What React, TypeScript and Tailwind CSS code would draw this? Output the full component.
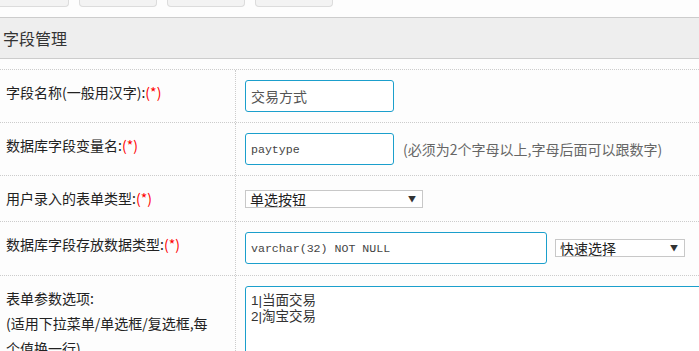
import React from 'react';

const cjk = "font-['Noto_Sans_CJK_SC','Noto_Sans',sans-serif]";

const Req = () => <span className="text-[#ff0000]">(*)</span>;

const FakeSelect = ({ label, width }: { label: string; width: string }) => (
  <div className={`${width} h-[18px] border border-[#c8c8c8] bg-white flex items-center justify-between pl-[4px] pr-[6px] text-[14px] leading-[16px] text-[#222]`}>
    <span>{label}</span>
    <span className="text-[8px] text-[#333]">▼</span>
  </div>
);

const Row = ({ h, label, children }: { h: string; label: React.ReactNode; children: React.ReactNode }) => (
  <div className={`flex ${h} border-t border-dotted border-[#ccc]`}>
    <div className="w-[236px] shrink-0 border-r border-dotted border-[#ccc] pl-[6px] pr-[16px] pt-[10px] leading-[25px] text-[14px] text-[#222]">
      {label}
    </div>
    <div className="flex-1 pl-[9px] pt-[10px]">{children}</div>
  </div>
);

const App: React.FC = () => {
  return (
    <div className={`w-full h-[351px] overflow-hidden bg-[#fdfdfd] ${cjk}`}>
      {/* top tabs, cut off */}
      <div className="h-[18px] border-b border-[#cccccc] flex items-start gap-[10px] ml-[-9px]">
        {[0, 1, 2, 3].map((i) => (
          <div key={i} className="w-[78px] h-[7px] bg-[#f3f3f3] border border-t-0 border-[#dcdcdc] rounded-b-[4px]" />
        ))}
      </div>

      {/* section header */}
      <div className="h-[41px] bg-[#eeeeee] border-b border-[#cccccc] flex items-center pl-[3px] text-[16px] text-[#333]">
        字段管理
      </div>

      <div className="mt-[10px]">
        <Row h="h-[53px]" label={<>字段名称(一般用汉字):<Req /></>}>
          <input
            readOnly
            value="交易方式"
            className={`w-[149px] h-[32px] border border-[#1b9fcc] rounded-[3px] px-[5px] text-[14px] text-[#555] bg-white outline-none ${cjk}`}
          />
        </Row>

        <Row h="h-[53px]" label={<>数据库字段变量名:<Req /></>}>
          <div className="flex items-center gap-[9px]">
            <input
              readOnly
              value="paytype"
              className="w-[149px] h-[32px] border border-[#1b9fcc] rounded-[3px] px-[5px] text-[11.6px] text-[#444] bg-white outline-none font-['Liberation_Mono',monospace]"
            />
            <span className="text-[14px] text-[#666]">(必须为2个字母以上,字母后面可以跟数字)</span>
          </div>
        </Row>

        <Row h="h-[46px]" label={<>用户录入的表单类型:<Req /></>}>
          <div className="h-[25px] flex items-center">
            <FakeSelect label="单选按钮" width="w-[178px]" />
          </div>
        </Row>

        <Row h="h-[54px]" label={<>数据库字段存放数据类型:<Req /></>}>
          <div className="flex items-center gap-[8px] h-[32px]">
            <input
              readOnly
              value="varchar(32) NOT NULL"
              className="w-[302px] h-[32px] border border-[#1b9fcc] rounded-[3px] px-[5px] text-[11.6px] text-[#444] bg-white outline-none font-['Liberation_Mono',monospace]"
            />
            <FakeSelect label="快速选择" width="w-[130px]" />
          </div>
        </Row>

        <Row
          h="h-[120px]"
          label={
            <>
              表单参数选项:
              <br />
              (适用下拉菜单/单选框/复选框,每个值换一行)
            </>
          }
        >
          <textarea
            readOnly
            value={'1|当面交易\n2|淘宝交易'}
            className="block w-[500px] h-[90px] border border-[#1b9fcc] rounded-tl-[3px] px-[5px] pt-[6px] text-[13.5px] leading-[16px] text-[#333] bg-white outline-none resize-none font-['Liberation_Sans','Noto_Sans_CJK_SC',sans-serif]"
          />
        </Row>
      </div>
    </div>
  );
};

export default App;
